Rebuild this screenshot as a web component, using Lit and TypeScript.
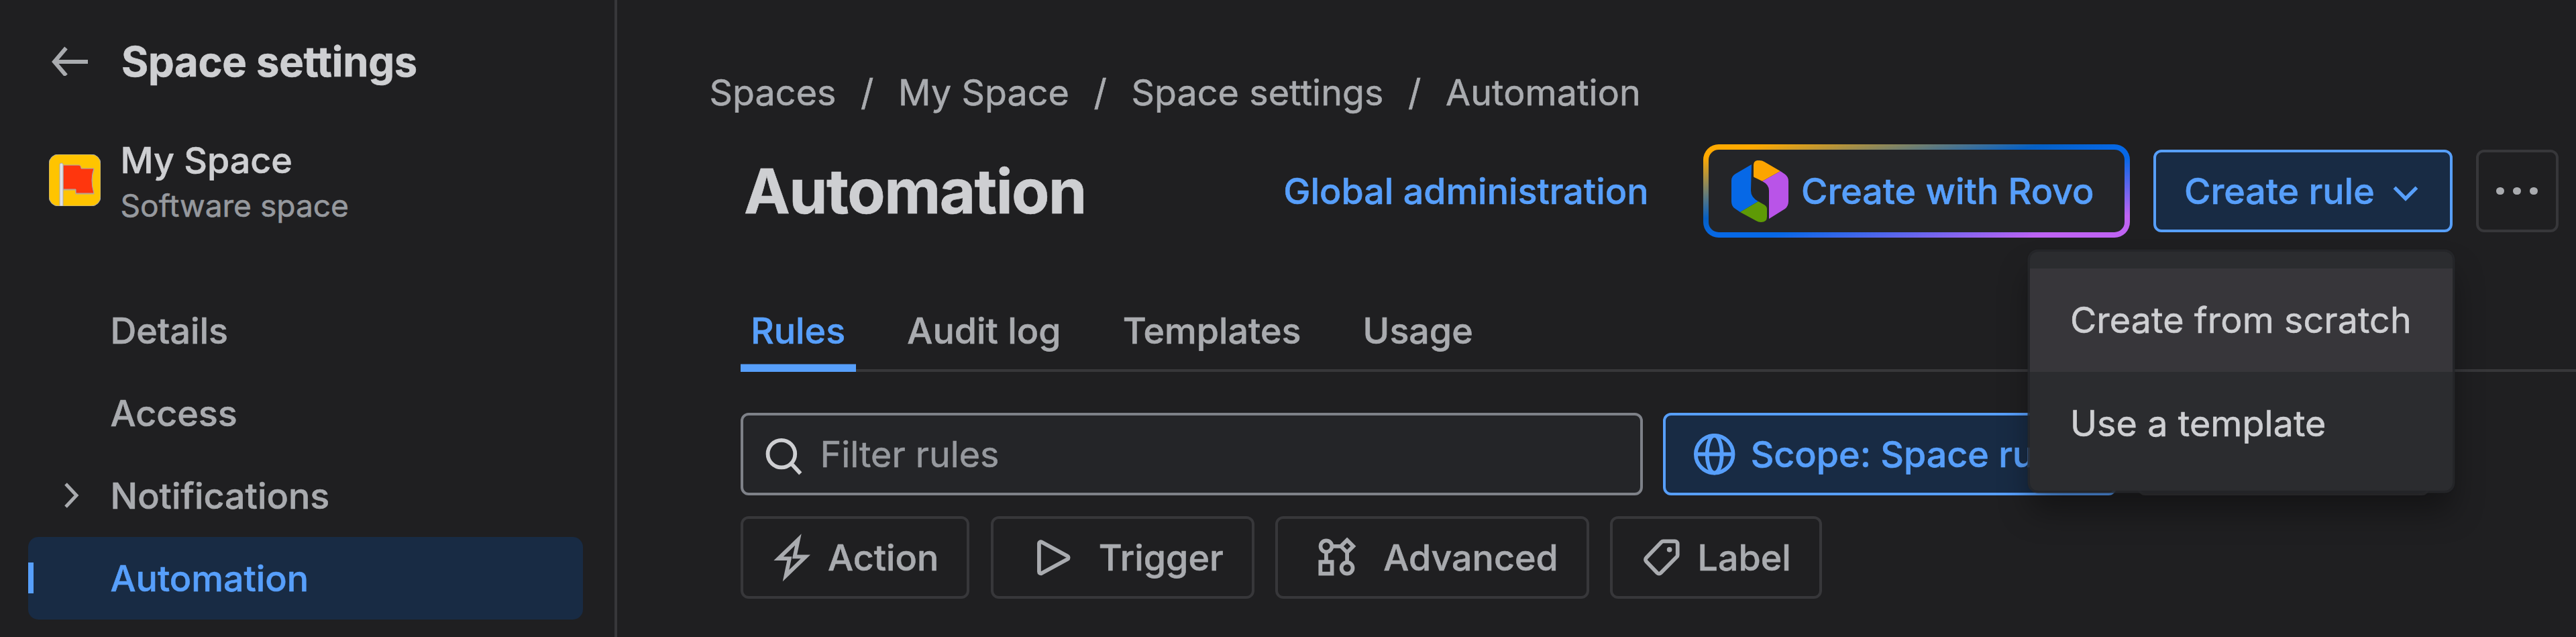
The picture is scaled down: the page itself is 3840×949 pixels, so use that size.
import { LitElement, html, css, svg } from "lit";
import { customElement, property } from "lit/decorators.js";
import { classMap } from "lit/directives/class-map.js";

const glyphs: Record<string, unknown> = {
  bolt: svg`<path d="M10.4 1 2.75 8.35H7L5.6 15 13.25 7.65H9Z"/>`,
  play: svg`<path d="M2.85 2.5v11a.65.65 0 0 0 1 .55L13.9 8.6a.7.7 0 0 0 0-1.2L3.85 1.95a.65.65 0 0 0-1 .55Z"/>`,
  flow: svg`<circle cx="3.9" cy="3.6" r="2.2"/><path d="M12 1.2 14.4 3.6 12 6 9.6 3.6Z"/><path d="M1.65 9.7h4.5v4.5h-4.5Z"/><circle cx="12" cy="12.05" r="2.2"/><path d="M6.1 3.6h3.5M3.9 5.8v3.9M12 6v3.9"/>`,
  tag: svg`<path d="M8.7 1.65H13.25a1 1 0 0 1 1 1V7a1 1 0 0 1-.3.7L7.75 13.95a1 1 0 0 1-1.4 0L2.1 9.5a1 1 0 0 1 0-1.4L8 1.95a1 1 0 0 1 .7-.3Z"/><circle class="dot" cx="11.1" cy="4.9" r="1"/>`,
  search: svg`<circle cx="7" cy="7.85" r="5.3"/><path d="m10.8 11.6 3.6 3.9"/>`,
  globe: svg`<circle cx="8" cy="8" r="7.25"/><ellipse cx="8" cy="8" rx="2.85" ry="7.25"/><path d="M.75 8h14.5"/>`,
};

@customElement("line-icon")
export class LineIcon extends LitElement {
  @property() name = "";
  static styles = css`
    :host { display: block; width: 61.44px; height: 61.44px; flex: none; }
    svg { display: block; width: 100%; height: 100%; overflow: visible; fill: none; stroke: currentColor; stroke-width: 1.5; }
    .dot { fill: currentColor; stroke: none; }
  `;
  render() {
    return html`<svg viewBox="0 0 16 16">${glyphs[this.name]}</svg>`;
  }
}

@customElement("app-root")
export class AppRoot extends LitElement {
  static styles = css`
    :host {
      display: flex; box-sizing: border-box; width: 3840px; height: 949px; overflow: hidden;
      background: #1f1f21; color: #a9abaf;
      font: 400 53.76px/77px Inter, sans-serif; white-space: nowrap;
      -webkit-text-stroke: 0.6px currentColor;
    }
    * { box-sizing: border-box; }
    svg { display: block; flex: none; fill: none; stroke: currentColor; }

    .sidebar { width: 919.5px; flex: none; border-right: 4px solid #37373a; }
    .side-head { display: flex; align-items: center; height: 182px; padding-left: 77px; }
    .side-title { margin-left: 50px; color: #cecfd2; font-size: 61.44px; font-weight: 700; letter-spacing: -0.25px; }
    .brand { display: flex; align-items: center; margin-top: 18px; height: 137px; padding-left: 73px; }
    .brand-text { margin-left: 29.5px; }
    .brand-name { height: 76px; line-height: 77px; font-weight: 500; color: #cecfd2; }
    .brand-kind { height: 61px; line-height: 61px; font-size: 46.08px; color: #96999e; }
    .nav { margin: 94px 46.5px 0 42px; }
    .nav-item { display: flex; align-items: center; height: 122.88px; border-radius: 15px; font-weight: 500; }
    .slot { display: flex; align-items: center; width: 122.5px; height: 46px; flex: none; padding-left: 52px; }
    .current { background: #182b44; color: #579ffb; }
    .current .slot { border-left: 8px solid #579ffb; }

    .main { display: flex; flex-direction: column; flex: 1; min-width: 0; }
    .crumbs { display: flex; height: 77px; margin: 99px 0 0 138px; letter-spacing: 0.08px; }
    .slash { width: 92.5px; text-align: center; }
    .content { margin-left: 184px; }
    .header { display: flex; align-items: center; height: 139px; margin: 39px 26.5px 0 0; }
    h1 { margin: 0 auto 0 5.5px; color: #cecfd2; font-size: 92.16px; line-height: 107px; font-weight: 700; letter-spacing: -1.6px; }
    .btn { display: flex; align-items: center; height: 123px; border: 4px solid #37373a; border-radius: 12px; font-weight: 500; flex: none; }
    .link { color: #579ffb; font-weight: 500; margin-right: 81.5px; }
    .rovo {
      height: 139px; width: 635.5px; border: 8px solid transparent; border-radius: 23px; color: #579ffb; padding-left: 34px;
      background: linear-gradient(#242528, #242528) padding-box,
        linear-gradient(to bottom right, #ffa900 7%, #055fc4 40%, #0668e6 50%, #0668e6 57%, #bf63f3 88%) border-box;
    }
    .rovo svg { margin-right: 19px; stroke: none; }
    .create-wrap { position: relative; margin: 0 35px; }
    .primary { border-color: #579ffb; background: #182b44; color: #579ffb; }
    .create { width: 446px; padding-left: 42.5px; gap: 23px; }
    .more { width: 123px; justify-content: center; gap: 13.5px; }
    .more i { width: 11.5px; height: 11.5px; border-radius: 50%; background: #a9abaf; }
    .menu {
      position: absolute; z-index: 2; top: 152px; right: 0; width: 630px; height: 356px; padding-top: 25px;
      border-radius: 12px; background: #2b2c2f; color: #cecfd2; letter-spacing: 0.1px;
      box-shadow: 0 0 0 3.5px rgba(39, 40, 43, .85), 0 31px 46px rgba(1, 4, 4, .36), 0 0 4px rgba(1, 4, 4, .5);
    }
    .menu-item { display: flex; align-items: center; height: 153.5px; padding-left: 60.5px; }
    .active { background: #37363a; }

    .tabs { display: flex; gap: 61.4px; height: 123px; margin-top: 76.5px; box-shadow: inset 0 -4px #37373a; font-weight: 500; }
    .tab { display: flex; align-items: center; padding: 0 15.4px; }
    .tab.on { color: #579ffb; box-shadow: inset 0 -11.5px #579ffb; }
    .filters { display: flex; gap: 30.7px; margin-top: 61.5px; }
    .chips { display: flex; gap: 31.3px; margin-top: 31px; }
    .input { width: 1345px; background: #242528; border-color: #7e8188; color: #96999e; font-weight: 400; padding-left: 30.5px; gap: 23px; }
    .input line-icon { color: #cecfd2; }
    .scope { width: 676px; padding-left: 42px; gap: 23px; }
    .state { width: 436px; }
    .chip { padding: 0 42px; gap: 23px; }
    .wide line-icon { margin: 0 15.36px; }
  `;

  private nav = ["Details", "Access", "Notifications", "Automation"];
  private crumbs = ["Spaces", "My Space", "Space settings", "Automation"];
  private tabs = ["Rules", "Audit log", "Templates", "Usage"];
  private chips: [string, string, boolean][] = [
    ["bolt", "Action", false], ["play", "Trigger", true], ["flow", "Advanced", true], ["tag", "Label", false],
  ];

  render() {
    return html`
      <aside class="sidebar">
        <div class="side-head">
          <svg width="54" height="44" viewBox="0 0 54 44" stroke-width="6"><path d="M54 23H5M21.500 2.500 4 23 21.500 43.500" /></svg>
          <div class="side-title">Space settings</div>
        </div>
        <div class="brand">
          <svg width="77" height="77" viewBox="0 0 77 77" stroke="none">
            <rect width="77" height="77" rx="14" fill="#ffc400" />
            <path d="M21 18h23q4 0 4 4h19q-6 17 0 37H40v-6H21Z" fill="#ff9c00" />
            <path d="M21 16h23q4 0 4 5h19q-6 17 0 37H40v-6H21Z" fill="#ff360d" />
            <path d="M16 15q0-2 2.500-2t2.500 2v62h-5Z" fill="#dfe1e6" />
          </svg>
          <div class="brand-text">
            <div class="brand-name">My Space</div>
            <div class="brand-kind">Software space</div>
          </div>
        </div>
        <nav class="nav">
          ${this.nav.map((label) => html`
            <div class=${classMap({ "nav-item": true, current: label === "Automation" })}>
              <span class="slot">${label === "Notifications"
                ? html`<svg width="24" height="40" viewBox="0 0 24 40" stroke-width="5"><path d="M4 3 20 20 4 37" /></svg>` : ""}</span>
              ${label}
            </div>`)}
        </nav>
      </aside>
      <main class="main">
        <div class="crumbs">
          ${this.crumbs.map((c, i) => html`${i ? html`<span class="slash">/</span>` : ""}<span>${c}</span>`)}
        </div>
        <div class="content">
          <div class="header">
            <h1>Automation</h1>
            <span class="link">Global administration</span>
            <div class="btn rovo">
              <svg width="85" height="92" viewBox="0 0 85 92">
                <path d="M30 6 6 20Q0 23.500 0 30V61Q0 68 5 71.500L13 77 40 61Q29 55 29 45Z" fill="#0668e6" />
                <path d="M33 24V7Q33-1 42 0 46 0 49 2L73 16 46 31 38 27Q33 25 33 24Z" fill="#fca400" />
                <path d="M73 16 79 20Q85 24 85 31V61Q85 68 80 72L56 87V45Q56 36 46 31Z" fill="#b954e8" />
                <path d="M40 61 47 65Q53 68 53 72V84Q53 92 44 92 40 92 37 90L13 77Z" fill="#5e9a06" />
              </svg>
              Create with Rovo
            </div>
            <div class="create-wrap">
              <div class="btn primary create">
                Create rule
                <svg width="46" height="46" viewBox="0 0 46 46" stroke-width="5.400"><path d="M6.500 17.300 23 34 39.500 17.300" /></svg>
              </div>
              <div class="menu">
                <div class="menu-item active">Create from scratch</div>
                <div class="menu-item">Use a template</div>
              </div>
            </div>
            <div class="btn more"><i></i><i></i><i></i></div>
          </div>
          <div class="tabs">
            ${this.tabs.map((t, i) => html`<div class=${classMap({ tab: true, on: i === 0 })}>${t}</div>`)}
          </div>
          <div class="filters">
            <div class="btn input"><line-icon name="search"></line-icon>Filter rules</div>
            <div class="btn primary scope"><line-icon name="globe"></line-icon>Scope: Space rules</div>
            <div class="btn state"></div>
          </div>
          <div class="chips">
            ${this.chips.map(([icon, label, wide]) => html`
              <div class=${classMap({ btn: true, chip: true, wide })}><line-icon name=${icon}></line-icon>${label}</div>`)}
          </div>
        </div>
      </main>`;
  }
}
